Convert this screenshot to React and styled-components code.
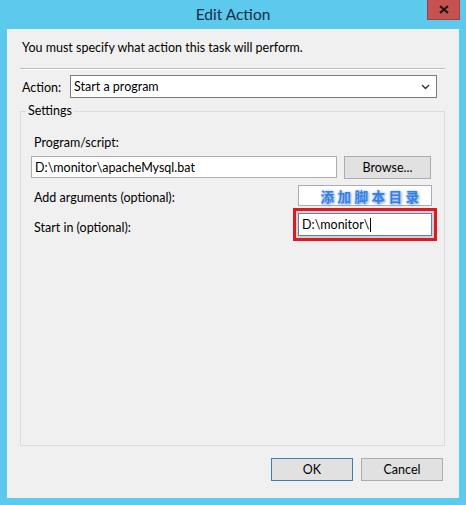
import React from 'react';
import styled, { createGlobalStyle } from 'styled-components';

const GlobalStyle = createGlobalStyle`
  body {
    margin: 0;
    font-family: Lato, "Noto Sans", sans-serif;
    font-size: 12.5px;
    color: #000;
  }
`;

const Window = styled.div`
  width: 466px;
  height: 505px;
  background: #5ccaec;
  display: flex;
  flex-direction: column;
  box-sizing: border-box;
`;

const TitleBar = styled.div`
  position: relative;
  height: 29px;
  display: flex;
  align-items: center;
  justify-content: center;
`;

const Title = styled.div`
  font-size: 15.5px;
  color: #1a2e44;
  margin-top: -1px;
`;

const CloseButton = styled.div`
  position: absolute;
  top: 0;
  right: 6px;
  width: 33px;
  height: 20px;
  box-sizing: border-box;
  background: #c75050;
  border: 1px solid #9c4040;
  border-top: none;
  display: flex;
  align-items: center;
  justify-content: center;
`;

const Panel = styled.div`
  flex: 1;
  margin: 0 7px 7px;
  background: #f0f0f0;
  display: flex;
  flex-direction: column;
  padding: 11px 14px 0 13px;
`;

const Intro = styled.div`
  line-height: 16px;
  padding-left: 2px;
`;

const Separator = styled.div`
  margin-top: 12px;
  height: 1px;
  background: #bcbcbc;
  border-bottom: 1px solid #fff;
`;

const ActionRow = styled.div`
  margin-top: 5px;
  display: flex;
  align-items: center;
  padding: 0 8px 0 2px;
`;

const ActionLabel = styled.div`
  width: 48px;
  padding-top: 2px;
`;

const Select = styled.div`
  flex: 1;
  height: 23px;
  box-sizing: border-box;
  background: #fff;
  border: 1px solid #7a7a7a;
  display: flex;
  align-items: center;
  justify-content: space-between;
  padding: 0 6px 0 3px;
`;

const Group = styled.fieldset`
  flex: 1;
  margin: 5px 0 0;
  border: 1px solid #dcdcdc;
  padding: 0 13px 0 10px;
  min-width: 0;
`;

const Legend = styled.legend`
  margin-left: -5px;
  padding: 0 2px;
  line-height: 16px;
`;

const FieldLabel = styled.div`
  line-height: 16px;
  padding-left: 3px;
  padding-top: ${(p) => p.$pad || 0}px;
  margin-top: ${(p) => p.$top || 0}px;
`;

const ProgramRow = styled.div`
  margin-top: 5px;
  display: flex;
  align-items: flex-start;
  gap: 7px;
`;

const Input = styled.div`
  height: ${(p) => p.$h || 21}px;
  box-sizing: border-box;
  background: #fff;
  border: 1px solid ${(p) => (p.$focused ? '#5d7fb3' : '#abadb3')};
  display: flex;
  align-items: center;
  padding-left: 3px;
  flex: ${(p) => (p.$grow ? 1 : 'none')};
  outline: ${(p) => (p.$marked ? '3px solid #dd1a22' : 'none')};
  outline-offset: 2px;
  box-shadow: ${(p) => (p.$marked ? '0 0 0 5px rgba(120,120,120,0.25)' : 'none')};
`;

const Caret = styled.span`
  display: inline-block;
  width: 1px;
  height: 14px;
  background: #000;
  margin-left: 1px;
`;

const Button = styled.div`
  width: ${(p) => p.$w || 82}px;
  height: 23px;
  box-sizing: border-box;
  background: #e1e1e1;
  border: 1px solid ${(p) => (p.$default ? '#3c7fb1' : '#adadad')};
  display: flex;
  align-items: center;
  justify-content: center;
`;

const OptionGrid = styled.div`
  margin-top: 6px;
  display: grid;
  grid-template-columns: 1fr 134px;
  row-gap: 7px;
  align-items: center;
  margin-right: -1px;
`;

const Note = styled.span`
  flex: 1;
  text-align: center;
  padding-left: 10px;
  font-family: "Noto Sans CJK SC", sans-serif;
  font-weight: 700;
  font-size: 13.5px;
  letter-spacing: 3.5px;
  color: #3580e6;
  text-shadow: 0 0 2px #a9ccf7, 1px 1px 3px rgba(60, 100, 160, 0.7);
`;

const Footer = styled.div`
  margin: 12px 2px 17px 0;
  display: flex;
  justify-content: flex-end;
  gap: 8px;
`;

export default function App() {
  return (
    <>
      <GlobalStyle />
      <Window>
        <TitleBar>
          <Title>Edit Action</Title>
          <CloseButton>
            <svg width="10" height="9" viewBox="0 0 10 9">
              <path d="M1 1 L9 8 M9 1 L1 8" stroke="#1a1a1a" strokeWidth="2.2" />
            </svg>
          </CloseButton>
        </TitleBar>
        <Panel>
          <Intro>You must specify what action this task will perform.</Intro>
          <Separator />
          <ActionRow>
            <ActionLabel>Action:</ActionLabel>
            <Select>
              <span>Start a program</span>
              <svg width="9" height="6" viewBox="0 0 9 6">
                <path d="M1 1 L4.5 4.5 L8 1" stroke="#333" strokeWidth="1.4" fill="none" />
              </svg>
            </Select>
          </ActionRow>
          <Group>
            <Legend>Settings</Legend>
            <FieldLabel $top={16}>Program/script:</FieldLabel>
            <ProgramRow>
              <Input $grow $h={22}>D:\monitor\apacheMysql.bat</Input>
              <Button $w={87}>Browse...</Button>
            </ProgramRow>
            <OptionGrid>
              <FieldLabel $pad={5}>Add arguments (optional):</FieldLabel>
              <Input>
                <Note>添加脚本目录</Note>
              </Input>
              <FieldLabel $pad={6}>Start in (optional):</FieldLabel>
              <Input $h={23} $focused $marked>
                D:\monitor\<Caret />
              </Input>
            </OptionGrid>
          </Group>
          <Footer>
            <Button $default>OK</Button>
            <Button>Cancel</Button>
          </Footer>
        </Panel>
      </Window>
    </>
  );
}
